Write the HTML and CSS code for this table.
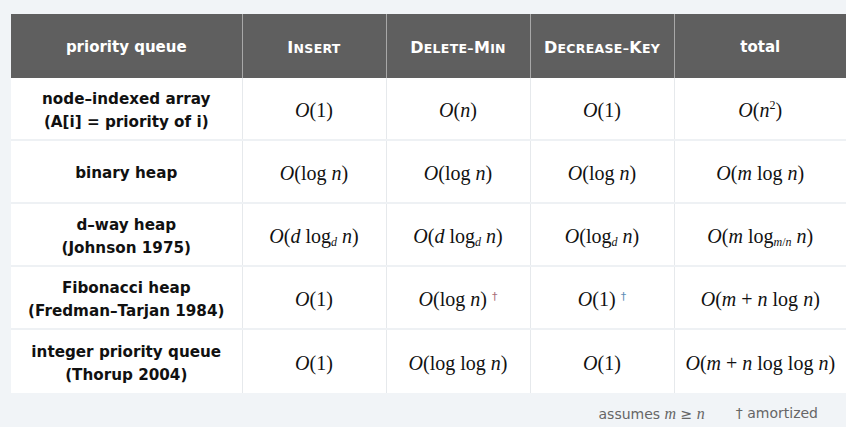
FILE: index.html
```html
<!DOCTYPE html>
<html>
<head>
<meta charset="utf-8">
<link rel="stylesheet" href="styles.css">
</head>
<body>
<div class="page">
  <table class="pq">
    <colgroup>
      <col class="c-name">
      <col class="c-op">
      <col class="c-op">
      <col class="c-op">
      <col class="c-total">
    </colgroup>
    <thead>
      <tr>
        <th>priority queue</th>
        <th class="sc"><span class="cap">I</span>NSERT</th>
        <th class="sc"><span class="cap">D</span>ELETE–<span class="cap">M</span>IN</th>
        <th class="sc"><span class="cap">D</span>ECREASE–<span class="cap">K</span>EY</th>
        <th>total</th>
      </tr>
    </thead>
    <tbody>
      <tr>
        <td class="name">node–indexed array<br>(A[i] = priority of i)</td>
        <td class="m"><i>O</i>(1)</td>
        <td class="m"><i>O</i>(<i>n</i>)</td>
        <td class="m"><i>O</i>(1)</td>
        <td class="m"><i>O</i>(<i>n</i><sup>2</sup>)</td>
      </tr>
      <tr>
        <td class="name">binary heap</td>
        <td class="m"><i>O</i>(log <i>n</i>)</td>
        <td class="m"><i>O</i>(log <i>n</i>)</td>
        <td class="m"><i>O</i>(log <i>n</i>)</td>
        <td class="m"><i>O</i>(<i>m</i> log <i>n</i>)</td>
      </tr>
      <tr>
        <td class="name">d–way heap<br>(Johnson 1975)</td>
        <td class="m"><i>O</i>(<i>d</i> log<sub><i>d</i></sub> <i>n</i>)</td>
        <td class="m"><i>O</i>(<i>d</i> log<sub><i>d</i></sub> <i>n</i>)</td>
        <td class="m"><i>O</i>(log<sub><i>d</i></sub> <i>n</i>)</td>
        <td class="m"><i>O</i>(<i>m</i> log<sub><i>m</i>/<i>n</i></sub> <i>n</i>)</td>
      </tr>
      <tr>
        <td class="name">Fibonacci heap<br>(Fredman–Tarjan 1984)</td>
        <td class="m"><i>O</i>(1)</td>
        <td class="m"><i>O</i>(log <i>n</i>) <span class="dag red">†</span></td>
        <td class="m"><i>O</i>(1) <span class="dag blue">†</span></td>
        <td class="m"><i>O</i>(<i>m</i> + <i>n</i> log <i>n</i>)</td>
      </tr>
      <tr>
        <td class="name">integer priority queue<br>(Thorup 2004)</td>
        <td class="m"><i>O</i>(1)</td>
        <td class="m"><i>O</i>(log log <i>n</i>)</td>
        <td class="m"><i>O</i>(1)</td>
        <td class="m"><i>O</i>(<i>m</i> + <i>n</i> log log <i>n</i>)</td>
      </tr>
    </tbody>
  </table>
  <div class="notes">
    <span>assumes <i class="mi">m</i> ≥ <i class="mi">n</i></span>
    <span>† amortized</span>
  </div>
</div>
</body>
</html>
```
FILE: styles.css
```css
html, body {
  margin: 0;
  padding: 0;
  background: #f1f4f7;
}
.page {
  padding: 14px 0 0 11px;
  width: 835px;
}
.pq {
  width: 835px;
  border-collapse: collapse;
  table-layout: fixed;
  background: #ffffff;
}
.c-name { width: 231px; }
.c-op { width: 144px; }
.c-total { width: 172px; }
.pq th {
  height: 62px;
  padding: 2px 0 0 0;
  background: #5f5f5f;
  color: #ffffff;
  font-family: "DejaVu Sans", sans-serif;
  font-weight: bold;
  font-size: 15px;
  text-align: center;
  border-right: 1px solid #a8a8a8;
}
.pq th:last-child { border-right: none; }
.pq th.sc {
  font-size: 12.5px;
  letter-spacing: 0.3px;
}
.pq th.sc .cap { font-size: 16px; }
.pq td {
  height: 57px;
  padding: 4px 0 0 0;
  text-align: center;
  vertical-align: middle;
  border-right: 1px solid #e6e9ec;
  border-bottom: 2px solid #eef1f4;
}
.pq td:last-child { border-right: none; }
.pq tbody tr:last-child td { border-bottom: none; height: 59px; }
.pq td.name {
  font-family: "DejaVu Sans", sans-serif;
  font-weight: bold;
  font-size: 15.2px;
  line-height: 23px;
  color: #111111;
}
.pq td.m {
  font-family: "Liberation Serif", serif;
  font-size: 20px;
  color: #111111;
}
.pq sup {
  font-size: 12px;
  vertical-align: 8px;
  line-height: 0;
}
.pq sub {
  font-size: 12px;
  vertical-align: -3px;
  line-height: 0;
}
.dag {
  font-family: "DejaVu Sans", sans-serif;
  font-size: 11px;
  vertical-align: 6px;
}
.dag.red { color: #a86e78; }
.dag.blue { color: #5b8db5; }
.notes {
  display: flex;
  justify-content: flex-end;
  gap: 31px;
  padding: 12px 28px 0 0;
  font-family: "DejaVu Sans", sans-serif;
  font-size: 14px;
  color: #666666;
}
.notes .mi {
  font-family: "Liberation Serif", serif;
  font-size: 16px;
}
```
